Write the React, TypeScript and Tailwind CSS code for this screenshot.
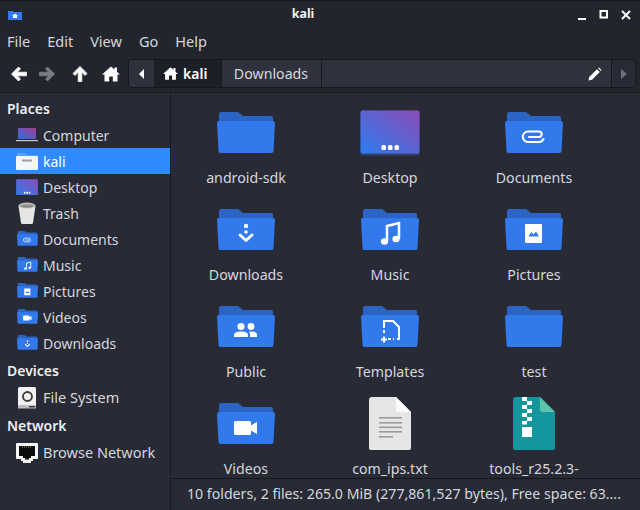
import React from "react";

const WHITE = "#ffffff";

function FolderBase({ children, width = 58, tab = "#2b64c2", front = "#3279ec" }: { children?: React.ReactNode; width?: number; tab?: string; front?: string }) {
  const h = (width * 42) / 58;
  return (
    <svg width={width} height={h} viewBox="0 0 58 42">
      <path d="M2 2 Q2 0 4 0 H21 L26 4 H54 Q56 4 56 6 V14 H2 Z" fill={tab} />
      <path d="M2 9 H56 Q58 9 58 11 L56.5 39 Q56.5 41 54.5 41 H3.5 Q1.5 41 1.5 39 L0 11 Q0 9 2 9 Z" fill={front} />
      {children}
    </svg>
  );
}

const Glyphs: Record<string, React.ReactNode> = {
  plain: null,
  docs: <path d="M24 25 H34 a2.7 2.7 0 0 0 0 -5.4 H23 a5.2 5.2 0 0 0 0 10.4 H34 a5 5 0 0 0 4.5 -3" fill="none" stroke={WHITE} strokeWidth="2" strokeLinecap="round" />,
  down: (
    <g fill={WHITE}>
      <circle cx="29" cy="17" r="2.2" />
      <circle cx="29" cy="23" r="1.8" />
      <path d="M23 26 L29 31.5 L35 26" fill="none" stroke={WHITE} strokeWidth="3" strokeLinecap="round" strokeLinejoin="round" />
    </g>
  ),
  music: (
    <g fill={WHITE}>
      <ellipse cx="23.5" cy="32.5" rx="3.6" ry="3.2" />
      <ellipse cx="35" cy="30" rx="3.6" ry="3.2" />
      <path d="M26 32 V17 L38 14 V30" fill="none" stroke={WHITE} strokeWidth="2.5" />
    </g>
  ),
  pics: (
    <g>
      <rect x="20" y="15" width="17" height="19" rx="1" fill={WHITE} />
      <path d="M23.5 27.5 L26.3 23 L28.5 25.5 L31 22.5 L34 27.5 Z" fill="#3279ec" />
    </g>
  ),
  public: (
    <g fill={WHITE}>
      <circle cx="24" cy="20.5" r="3.6" />
      <circle cx="34" cy="20.5" r="3.4" />
      <path d="M17 31 V29 Q17 25.5 24 25.5 Q31 25.5 31 29 V31 Z" />
      <path d="M33 31 V28 Q33 26.5 31.5 25.7 Q40 24.5 40 29 V31 Z" />
    </g>
  ),
  templates: (
    <g fill="none" stroke={WHITE} strokeWidth="2">
      <path d="M23 22 V15 H32 L38 21 V33 H36" />
      <path d="M23 24 V27" />
      <path d="M27 33 H33" strokeDasharray="3 2" />
      <path d="M20 33.5 H26 M23 30.5 V36.5" />
    </g>
  ),
  videos: (
    <g fill={WHITE}>
      <rect x="17" y="18" width="17" height="14" rx="1.5" />
      <path d="M33 23 L40 19 V31 L33 27 Z" />
    </g>
  ),
};

function Folder({ g = "plain", width = 58 }: { g?: string; width?: number }) {
  return <FolderBase width={width}>{Glyphs[g]}</FolderBase>;
}

function DesktopIcon({ width = 60 }: { width?: number }) {
  const id = `dg${width}`;
  return (
    <svg width={width} height={(width * 46) / 60} viewBox="0 0 60 46">
      <defs>
        <linearGradient id={id} x1="0" y1="1" x2="1" y2="0">
          <stop offset="0" stopColor="#2c7cf0" />
          <stop offset="1" stopColor="#8b4cb5" />
        </linearGradient>
      </defs>
      <rect x="0.5" y="0.5" width="59" height="45" rx="2" fill="#3a3f70" />
      <rect x="0.5" y="0.5" width="59" height="43" rx="2" fill={`url(#${id})`} />
      <g fill={WHITE}>
        <rect x="21.5" y="35" width="4.5" height="5" rx="1.5" />
        <rect x="28" y="35" width="4.5" height="5" rx="1.5" />
        <rect x="34.5" y="35" width="4.5" height="5" rx="1.5" />
      </g>
    </svg>
  );
}

function TextFile() {
  return (
    <svg width="42" height="54" viewBox="0 0 42 54">
      <path d="M3 0 H27 L42 15 V51 Q42 53 40 53 H3 Q0 53 0 51 V3 Q0 0 3 0 Z" fill="#e6e6e6" />
      <path d="M27 0 L42 15 H30 Q27 15 27 12 Z" fill="#fafafa" />
      <g fill="#9b9b9b">
        <rect x="10" y="20" width="23" height="1.6" />
        <rect x="10" y="25" width="23" height="1.6" />
        <rect x="10" y="29.5" width="23" height="1.6" />
        <rect x="10" y="34" width="23" height="1.6" />
        <rect x="10" y="39" width="14" height="1.6" />
      </g>
    </svg>
  );
}

function ZipFile() {
  return (
    <svg width="42" height="54" viewBox="0 0 42 54">
      <path d="M3 0 H27 L42 15 V51 Q42 53 40 53 H3 Q0 53 0 51 V3 Q0 0 3 0 Z" fill="#15969c" />
      <path d="M27 0 L42 15 H30 Q27 15 27 12 Z" fill="#5cc4a8" />
      <g fill={WHITE}>
        <rect x="9" y="0" width="5" height="4" />
        <rect x="14" y="4" width="5" height="4" />
        <rect x="9" y="8" width="5" height="4" />
        <rect x="14" y="12" width="5" height="4" />
        <rect x="9" y="16" width="5" height="4" />
        <rect x="14" y="20" width="5" height="4" />
        <rect x="9" y="24" width="5" height="3.5" />
        <rect x="9" y="30" width="10" height="10" />
      </g>
    </svg>
  );
}

function Arrow({ rot = 0, color = WHITE, size = 18 }: { rot?: number; color?: string; size?: number }) {
  return (
    <svg width={size} height={size} viewBox="0 0 18 18" style={{ transform: `rotate(${rot}deg)` }}>
      <path d="M8.5 2 L1.5 9 L8.5 16 L10.5 14 L7.2 10.8 H16.5 V7.2 H7.2 L10.5 4 Z" fill={color} stroke={color} strokeWidth="0.8" strokeLinejoin="round" />
    </svg>
  );
}

function Home({ size = 18 }: { size?: number }) {
  return (
    <svg width={size} height={size} viewBox="0 0 18 18">
      <path d="M9 1.5 L12.5 4.6 V2.5 H15 V6.8 L18 9.5 H15.5 V16.5 H10.8 V11.5 H7.2 V16.5 H2.5 V9.5 H0 Z" fill={WHITE} />
    </svg>
  );
}

function Laptop() {
  return (
    <svg width="22" height="14" viewBox="0 0 22 14">
      <defs>
        <linearGradient id="lap" x1="0" y1="1" x2="1" y2="0">
          <stop offset="0" stopColor="#2c6fe0" />
          <stop offset="1" stopColor="#a03c90" />
        </linearGradient>
      </defs>
      <rect x="2" y="0" width="18" height="11" fill="url(#lap)" />
      <rect x="0" y="12" width="22" height="1.2" fill="#c8c8cc" />
    </svg>
  );
}

function KaliFolder() {
  return (
    <svg width="22" height="18" viewBox="0 0 22 18">
      <path d="M1 1 H9 L11 3 H21 V6 H1 Z" fill="#5aa0f5" />
      <rect x="0" y="4" width="22" height="14" rx="1" fill="#f4f6fa" />
      <rect x="6" y="7.5" width="10" height="2" fill="#9aa0aa" />
    </svg>
  );
}

function Trash() {
  return (
    <svg width="18" height="22" viewBox="0 0 18 22">
      <path d="M0.5 4 L3 21 Q3.2 22 4.5 22 H13.5 Q14.8 22 15 21 L17.5 4 Z" fill="#e6e6e4" />
      <ellipse cx="9" cy="3.5" rx="8.5" ry="3" fill="#bdbdb8" />
      <ellipse cx="9" cy="4" rx="6.5" ry="1.8" fill="#8f8f8b" />
    </svg>
  );
}

function Drive() {
  return (
    <svg width="18" height="22" viewBox="0 0 18 22">
      <rect x="0" y="0" width="18" height="21" rx="1.5" fill="#f2f2f2" />
      <rect x="0" y="18" width="18" height="3.5" fill="#bcbcbc" />
      <rect x="11" y="19" width="6" height="1.5" fill="#444" />
      <circle cx="9.5" cy="9.5" r="4.5" fill="none" stroke="#3a3a3a" strokeWidth="1.8" />
    </svg>
  );
}

function NetIcon() {
  return (
    <svg width="22" height="20" viewBox="0 0 22 20">
      <path d="M1 0 H21 Q22 0 22 1 V15 Q22 16 21 16 H17 V18 H15 V20 H7 V18 H5 V16 H1 Q0 16 0 15 V1 Q0 0 1 0 Z" fill="#f5f5f5" />
      <path d="M3 3 H19 V13 H15 V15 H13 V16.5 H9 V15 H7 V13 H3 Z" fill="#0c0c0c" />
      <path d="M6 4 H16" stroke="#b89a3c" strokeWidth="1" strokeDasharray="1 1" />
    </svg>
  );
}

function SideRow({ icon, label, active, wide }: { icon: React.ReactNode; label: string; active?: boolean; wide?: boolean }) {
  return (
    <div className={`flex h-[26px] items-center ${active ? "bg-[#2f8bff] text-white" : "text-[#d5d7dc]"}`}>
      <div className="ml-[16px] flex w-[22px] justify-center">{icon}</div>
      <span className={`ml-[5px] ${wide ? "text-[14.5px]" : "text-[14px]"}`}>{label}</span>
    </div>
  );
}

function Head({ children, className = "" }: { children: React.ReactNode; className?: string }) {
  return <div className={`flex items-center pl-[7px] text-[14px] font-semibold text-[#eceef2] ${className}`}>{children}</div>;
}

function Cell({ icon, label, drop = "" }: { icon: React.ReactNode; label: string; drop?: string }) {
  return (
    <div className="flex h-[97px] flex-col items-center">
      <div className="flex h-[61px] w-full items-end justify-center">
        <div className={`flex ${drop}`}>{icon}</div>
      </div>
      <div className="mt-[14px] whitespace-nowrap text-[14.2px] leading-[20px] text-[#d5d7dc]">{label}</div>
    </div>
  );
}

export default function App() {
  const items: [React.ReactNode, string, string?][] = [
    [<Folder />, "android-sdk"],
    [<DesktopIcon />, "Desktop", "-mb-[2px]"],
    [<Folder g="docs" />, "Documents"],
    [<Folder g="down" />, "Downloads"],
    [<Folder g="music" />, "Music"],
    [<Folder g="pics" />, "Pictures"],
    [<Folder g="public" />, "Public"],
    [<Folder g="templates" />, "Templates"],
    [<Folder />, "test"],
    [<Folder g="videos" />, "Videos"],
    [<TextFile />, "com_ips.txt", "-mb-[6px]"],
    [<ZipFile />, "tools_r25.2.3-", "-mb-[6px]"],
  ];
  return (
    <div className="flex h-[510px] w-[640px] flex-col overflow-hidden bg-[#282a36] font-['Noto_Sans',sans-serif]">
      <div className="relative flex h-[28px] items-center border-t border-[#15161b] bg-[#23252e] pl-[8px] pr-[8px]">
        <svg width="14" height="10" viewBox="0 0 14 10">
          <path d="M0 1 H5 L6 2 H14 V10 H0 Z" fill="#3279ec" />
          <path d="M7 3.5 L10 6 H9 V8 H5 V6 H4 Z" fill="#fff" />
        </svg>
        <span className="flex-1 pl-[8px] text-center text-[12.5px] font-bold text-[#eceef2]">kali</span>
        <div className="flex items-center gap-[10px]">
          <svg width="12" height="12" viewBox="0 0 12 12"><rect x="2" y="9" width="8" height="2" fill="#fff" /></svg>
          <svg width="12" height="12" viewBox="0 0 12 12"><rect x="2.5" y="2" width="6.5" height="6.5" fill="none" stroke="#fff" strokeWidth="2" /></svg>
          <svg width="12" height="12" viewBox="0 0 12 12"><path d="M2 2 L10 10 M10 2 L2 10" stroke="#fff" strokeWidth="2" /></svg>
        </div>
      </div>

      <div className="flex h-[27px] items-center gap-[17px] bg-[#23252e] pl-[7px] text-[14.5px] text-[#d5d7dc]">
        <span>File</span>
        <span>Edit</span>
        <span>View</span>
        <span>Go</span>
        <span>Help</span>
      </div>

      <div className="flex h-[38px] items-center border-b border-[#1a1b21] bg-[#23252e] pl-[10px] pr-[4px]">
        <Arrow />
        <div className="ml-[10px]"><Arrow rot={180} color="#7c7d84" /></div>
        <div className="ml-[15px]"><Arrow rot={90} /></div>
        <div className="ml-[13px]"><Home /></div>
        <div className="ml-[8px] flex h-[29px] flex-1 overflow-hidden rounded-[4px] border border-[#17181d]">
          <div className="flex w-[25px] items-center justify-center bg-[#2f313d]">
            <svg width="6" height="10" viewBox="0 0 6 10"><path d="M5 0 V10 L0 5 Z" fill="#fff" /></svg>
          </div>
          <div className="flex w-[67px] items-center gap-[5px] bg-[#1d1f26] pl-[9px] text-[14px] font-semibold text-white">
            <Home size={15} />
            <span>kali</span>
          </div>
          <div className="flex w-[100px] items-center justify-center border-l border-[#17181d] bg-[#2f313d] pr-[1px] text-[14.2px] text-[#d5d7dc]">Downloads</div>
          <div className="flex flex-1 items-center justify-end border-l border-r border-[#17181d] bg-[#2f313d] pr-[9px]">
            <svg width="14" height="14" viewBox="0 0 14 14">
              <path d="M0.5 13.5 L1.2 10 L9 2.2 L11.8 5 L4 12.8 Z M10 1.2 L11 0.5 L13.5 3 L12.8 4 Z" fill="#fff" />
            </svg>
          </div>
          <div className="flex w-[23px] items-center justify-center bg-[#282a36]">
            <svg width="6" height="10" viewBox="0 0 6 10"><path d="M0 0 V10 L6 5 Z" fill="#6f7078" /></svg>
          </div>
        </div>
      </div>

      <div className="flex min-h-0 flex-1">
        <div className="w-[171px] shrink-0 border-r border-[#1a1b21] bg-[#282a36]">
          <Head className="h-[29px] pt-[1px]">Places</Head>
          <SideRow icon={<Laptop />} label="Computer" />
          <SideRow icon={<KaliFolder />} label="kali" active />
          <SideRow icon={<DesktopIcon width={22} />} label="Desktop" />
          <SideRow icon={<Trash />} label="Trash" />
          <SideRow icon={<Folder g="docs" width={21} />} label="Documents" />
          <SideRow icon={<Folder g="music" width={21} />} label="Music" />
          <SideRow icon={<Folder g="pics" width={21} />} label="Pictures" />
          <SideRow icon={<Folder g="videos" width={21} />} label="Videos" />
          <SideRow icon={<Folder g="down" width={21} />} label="Downloads" />
          <Head className="h-[29px]">Devices</Head>
          <SideRow icon={<Drive />} label="File System" wide />
          <Head className="h-[29px]">Network</Head>
          <SideRow icon={<NetIcon />} label="Browse Network" wide />
        </div>

        <div className="flex min-w-0 flex-1 flex-col">
          <div className="min-h-0 flex-1 overflow-hidden pl-[3px]">
            <div className="grid w-[432px] grid-cols-3">
              {items.map(([icon, label, drop], i) => (
                <Cell key={i} icon={icon} label={label} drop={drop} />
              ))}
            </div>
          </div>
          <div className="flex h-[32px] items-center border-t border-[#15161b] pb-[2px] pl-[16px] text-[14.15px] whitespace-nowrap text-[#d5d7dc]">
            10 folders, 2 files: 265.0 MiB (277,861,527 bytes), Free space: 63....
          </div>
        </div>
      </div>
    </div>
  );
}
